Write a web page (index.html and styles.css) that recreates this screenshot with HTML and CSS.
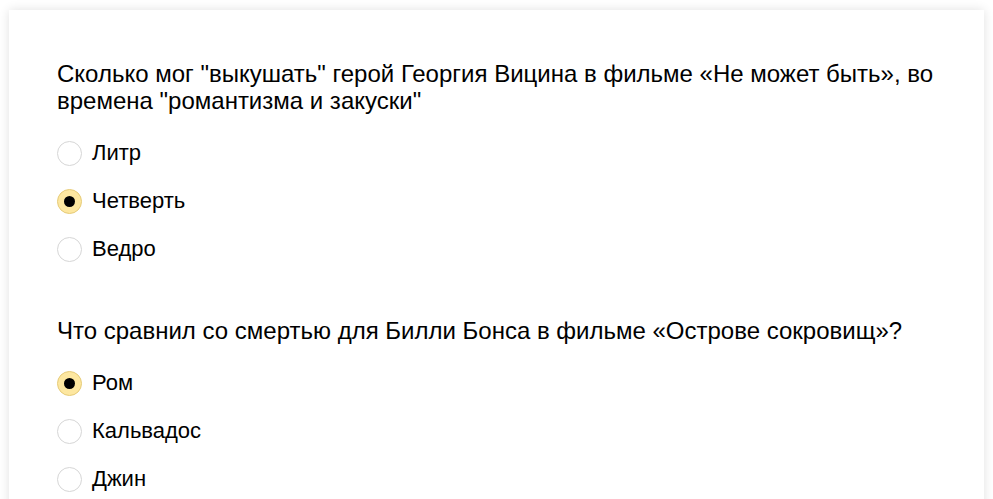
FILE: index.html
```html
<!DOCTYPE html>
<html lang="ru">
<head>
  <meta charset="UTF-8" />
  <title>Тест</title>
  <link rel="stylesheet" href="styles.css">
</head>
<body>
  <div class="card">
    <div class="question">
      <div class="question-title">Сколько мог "выкушать" герой Георгия Вицина в фильме «Не может быть», во времена "романтизма и закуски"</div>
      <div class="options">
        <label class="option"><span class="radio"></span>Литр</label>
        <label class="option"><span class="radio checked"></span>Четверть</label>
        <label class="option"><span class="radio"></span>Ведро</label>
      </div>
    </div>

    <div class="question">
      <div class="question-title">Что сравнил со смертью для Билли Бонса в фильме «Острове сокровищ»?</div>
      <div class="options">
        <label class="option"><span class="radio checked"></span>Ром</label>
        <label class="option"><span class="radio"></span>Кальвадос</label>
        <label class="option"><span class="radio"></span>Джин</label>
      </div>
    </div>
  </div>
</body>
</html>
```

FILE: styles.css
```css
* {
  box-sizing: border-box;
  margin: 0;
  padding: 0;
}

body {
  font-family: 'Liberation Sans', Arial, sans-serif;
  background-color: #fff;
  color: #000;
  padding: 10px 9px 0 9px;
  overflow: hidden;
}

.card {
  background-color: #fff;
  box-shadow: 0 0 10px rgba(0,0,0,0.12);
  padding: 50px 30px 40px 48px;
  min-height: 600px;
}

.question {
  margin-bottom: 55px;
}

.question-title {
  font-size: 24px;
  line-height: 27px;
  margin-bottom: 26px;
}

.options {
  display: flex;
  flex-direction: column;
  gap: 22px;
}

.option {
  display: flex;
  align-items: center;
  gap: 10px;
  font-size: 22px;
  line-height: 26px;
  cursor: pointer;
}

.radio {
  width: 25px;
  height: 25px;
  border-radius: 50%;
  border: 1px solid #d6d6d6;
  background-color: #fff;
  display: flex;
  align-items: center;
  justify-content: center;
}

.radio.checked {
  background-color: #fde7a0;
  border-color: #e6cb78;
}

.radio.checked::after {
  content: "";
  width: 11px;
  height: 11px;
  border-radius: 50%;
  background-color: #000;
}
```
